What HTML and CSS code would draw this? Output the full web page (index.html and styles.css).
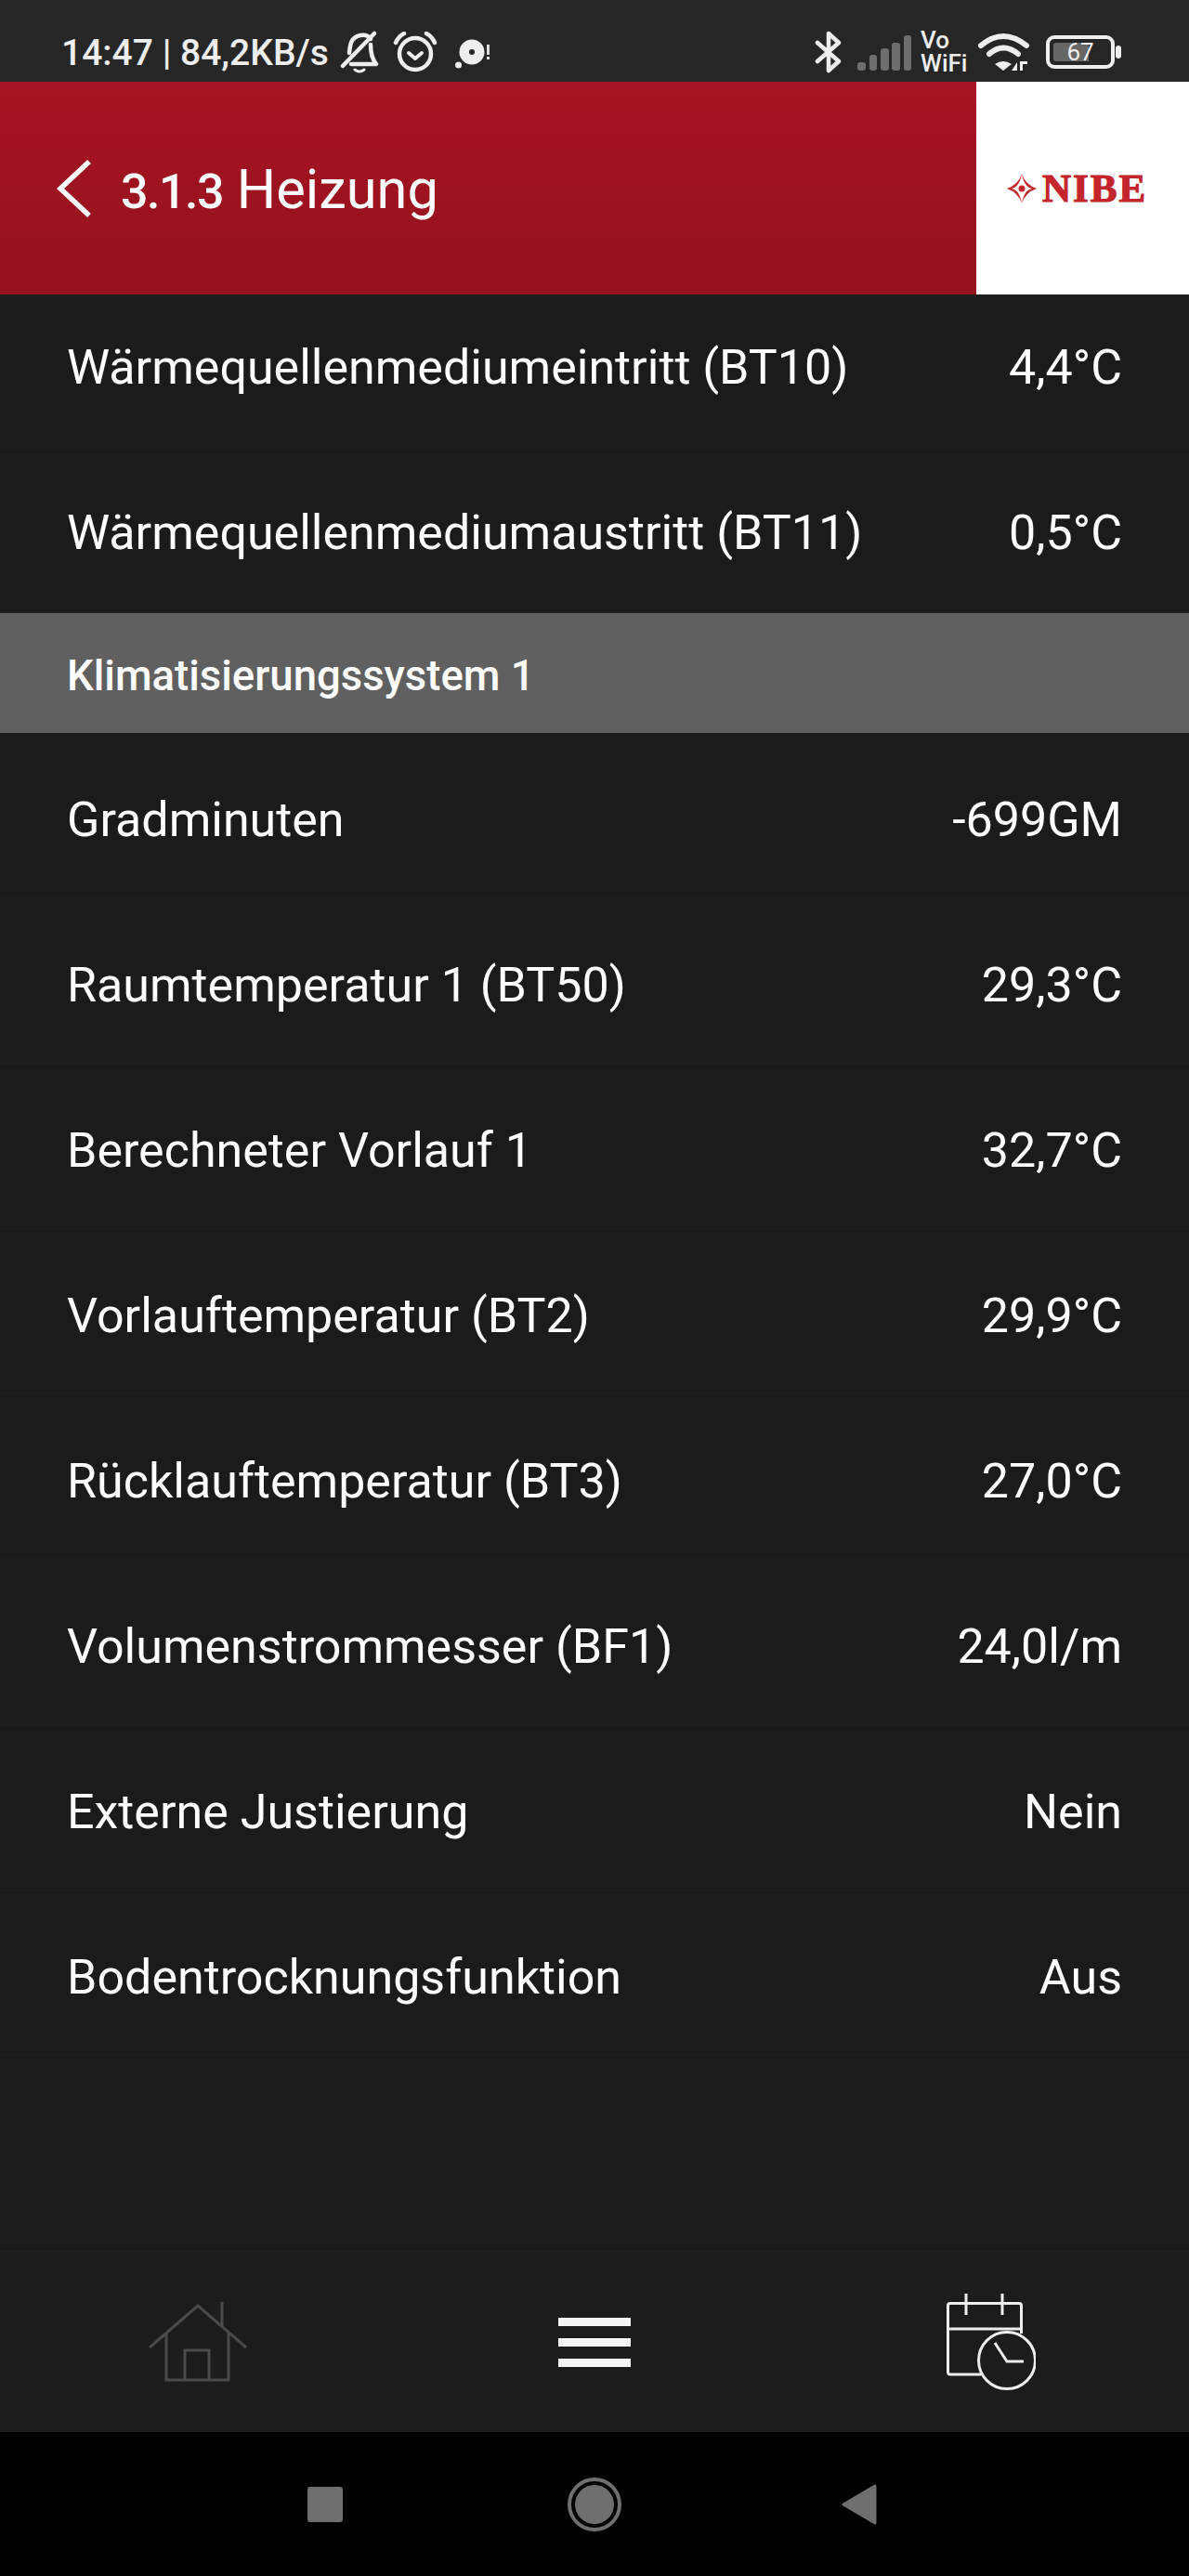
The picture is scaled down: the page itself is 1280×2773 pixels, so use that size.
FILE: index.html
```html
<!DOCTYPE html>
<html lang="de">
<head>
<meta charset="utf-8">
<title>3.1.3 Heizung</title>
<link rel="stylesheet" href="styles.css">
</head>
<body>
<div class="phone">
  <div class="status">
    <div class="status-left">
      <span class="status-text">14:47 | 84,2KB/s</span>
      <svg class="ic-bell" width="42" height="46" viewBox="0 0 42 46" fill="none" stroke="#eee" stroke-width="4.500" stroke-linecap="round" stroke-linejoin="round">
        <path d="M10 24 C11 14 12 7 22 5 C27 4 31 6 33 9"/>
        <path d="M37 3 L3 38"/>
        <path d="M33 15 C33 24 34 30 39 36 L12 36"/>
        <path d="M16 42 Q21 46 26 42" stroke-width="3"/>
      </svg>
      <svg class="ic-alarm" width="48" height="44" viewBox="0 0 48 44" fill="none" stroke="#eee" stroke-linecap="round" stroke-linejoin="round">
        <circle cx="24" cy="24" r="17" stroke-width="4.500"/>
        <path d="M17 23 L24 29 L31 23" stroke-width="4"/>
        <path d="M3 12 Q6 5 12 2" stroke-width="4.500"/>
        <path d="M45 12 Q42 5 36 2" stroke-width="4.500"/>
      </svg>
      <svg class="ic-rec" width="38" height="34" viewBox="0 0 38 34">
        <circle cx="18" cy="14" r="13.500" fill="#eee"/>
        <circle cx="18" cy="14" r="3" fill="#262626"/>
        <circle cx="3.500" cy="28" r="3.500" fill="#eee"/>
        <rect x="34" y="6" width="3" height="11" fill="#ddd"/>
        <rect x="34" y="19" width="3" height="3" fill="#ddd"/>
      </svg>
    </div>
    <div class="status-right">
      <svg class="ic-bt" width="30" height="46" viewBox="0 0 30 46" fill="none" stroke="#eee" stroke-width="4.500" stroke-linecap="round" stroke-linejoin="round">
        <path d="M3 13 L26 33 L15 43 L15 3 L26 13 L3 33"/>
      </svg>
      <svg class="ic-signal" width="58" height="38" viewBox="0 0 58 38" fill="#6e6e6e">
        <rect x="0" y="29" width="9" height="9" rx="3"/>
        <rect x="13" y="21" width="8" height="17" rx="3"/>
        <rect x="25" y="14" width="9" height="24" rx="3"/>
        <rect x="37" y="8" width="9" height="30" rx="3"/>
        <rect x="50" y="0" width="8" height="38" rx="3"/>
      </svg>
      <div class="vowifi"><span>Vo</span><span>WiFi</span></div>
      <svg class="ic-wifi" width="56" height="42" viewBox="0 0 56 42" fill="none" stroke="#eee" stroke-width="6" stroke-linecap="round">
        <path d="M3 14 Q27 -6 52 14"/>
        <path d="M12 23 Q27 10 43 23"/>
        <path d="M27 41 L18 34 Q27 28 36 34 Z" fill="#eee" stroke="none"/>
        <path d="M42 32 L42 41 L36 41 Z" fill="#eee" stroke="none"/>
        <path d="M45 31 L45 41 L48 41 L48 34 L53 34 L53 31 Z" fill="#eee" stroke="none"/>
      </svg>
      <div class="battery">
        <div class="battery-body">
          <div class="battery-fill"></div>
          <span class="battery-num">67</span>
        </div>
        <div class="battery-nub"></div>
      </div>
    </div>
  </div>

  <header class="header">
    <div class="header-main">
      <svg class="ic-back" width="38" height="62" viewBox="0 0 38 62" fill="none" stroke="#fff" stroke-width="5.500">
        <path d="M35 2 L4 31 L35 60"/>
      </svg>
      <span class="title"><span class="title-num">3.1.3</span> Heizung</span>
    </div>
    <div class="logo">
      <svg class="logo-mark" width="32" height="32" viewBox="0 0 32 32" fill="#c4252c">
        <path d="M16 0 Q12 12 0 16 Q13 18 16 0 Z"/>
        <path d="M16 0 Q20 12 32 16 Q19 18 16 0 Z"/>
        <path d="M16 32 Q12 20 0 16 Q13 14 16 32 Z"/>
        <path d="M16 32 Q20 20 32 16 Q19 14 16 32 Z"/>
        <circle cx="16" cy="16" r="3.500"/>
      </svg>
      <span class="logo-text">NIBE</span>
    </div>
  </header>

  <main class="list">
    <div class="list-scroll">
      <div class="row row-top"><span>Wärmequellenmediumeintritt (BT10)</span><span>4,4°C</span></div>
      <div class="row row-top"><span>Wärmequellenmediumaustritt (BT11)</span><span>0,5°C</span></div>
      <div class="section">Klimatisierungssystem 1</div>
      <div class="row"><span>Gradminuten</span><span>-699GM</span></div>
      <div class="row"><span>Raumtemperatur 1 (BT50)</span><span>29,3°C</span></div>
      <div class="row"><span>Berechneter Vorlauf 1</span><span>32,7°C</span></div>
      <div class="row"><span>Vorlauftemperatur (BT2)</span><span>29,9°C</span></div>
      <div class="row"><span>Rücklauftemperatur (BT3)</span><span>27,0°C</span></div>
      <div class="row"><span>Volumenstrommesser (BF1)</span><span>24,0l/m</span></div>
      <div class="row"><span>Externe Justierung</span><span>Nein</span></div>
      <div class="row"><span>Bodentrocknungsfunktion</span><span>Aus</span></div>
    </div>
  </main>

  <nav class="tabs">
    <svg width="106" height="86" viewBox="0 0 106 86" fill="none" stroke="#4a4a4a" stroke-width="3">
      <path d="M1 49 L53 4 L105 49"/>
      <path d="M79 0 L79 26"/>
      <path d="M19 33 L19 84 L86 84 L86 33"/>
      <path d="M39 84 L39 52 L65 52 L65 84"/>
    </svg>
    <div class="burger"><i></i><i></i><i></i></div>
    <svg width="96" height="104" viewBox="0 0 96 104" fill="none" stroke="#eee" stroke-width="3">
      <path d="M37 87 L4 87 Q1.500 87 1.500 84 L1.500 13 Q1.500 10.500 4 10.500 L78 10.500 Q80.500 10.500 80.500 13 L80.500 43"/>
      <path d="M1.500 38 L80.500 38"/>
      <path d="M21 0 L21 23"/>
      <path d="M60 0 L60 23"/>
      <circle cx="65" cy="72" r="30.500"/>
      <path d="M52 53 L65 73 L83 73"/>
    </svg>
  </nav>

  <div class="sysnav">
    <div class="sys-square"></div>
    <div class="sys-circle"><div class="sys-dot"></div></div>
    <svg class="sys-back" width="38" height="44" viewBox="0 0 38 44" fill="#6f6f6f" stroke="#6f6f6f" stroke-width="3" stroke-linejoin="round">
      <path d="M36 2 L2 22 L36 42 Z"/>
    </svg>
  </div>
</div>
</body>
</html>
```

FILE: styles.css
```css
* { box-sizing: border-box; }
html, body { margin: 0; padding: 0; background: #1b1b1b; }
.phone {
  width: 1280px;
  height: 2773px;
  display: flex;
  flex-direction: column;
  font-family: Roboto, "Liberation Sans", sans-serif;
  color: #fff;
  overflow: hidden;
}
.status {
  height: 88px;
  flex: none;
  background: #262626;
  display: flex;
  justify-content: space-between;
  align-items: center;
  padding: 24px 73px 0 66px;
  color: #eee;
}
.status-left, .status-right { display: flex; align-items: center; }
.status-text { font-size: 39px; line-height: 46px; font-weight: 500; margin-right: 12px; padding-top: 2px; }
.ic-alarm { margin-left: 15px; }
.ic-rec { margin-left: 19px; margin-top: 6px; }
.ic-signal { margin-left: 16px; margin-top: 2px; }
.vowifi {
  display: flex;
  flex-direction: column;
  margin-left: 10px;
  font-size: 26px;
  line-height: 25px;
  font-weight: 500;
  width: 52px;
}
.ic-wifi { margin-left: 10px; }
.battery { display: flex; align-items: center; margin-left: 17px; }
.battery-body {
  position: relative;
  width: 74px;
  height: 36px;
  border: 4px solid #eee;
  border-radius: 9px;
  display: flex;
  align-items: center;
  justify-content: center;
}
.battery-fill {
  position: absolute;
  left: 4px;
  top: 4px;
  bottom: 4px;
  width: 38px;
  background: #666;
  border-radius: 3px 0 0 3px;
}
.battery-num { position: relative; font-size: 26px; line-height: 28px; color: #eee; }
.battery-nub { width: 6px; height: 14px; margin-left: 1px; background: #eee; border-radius: 3px; }

.header { height: 229px; flex: none; display: flex; }
.header-main {
  flex: 1;
  background: linear-gradient(#a81423, #93121c);
  display: flex;
  align-items: center;
  padding-left: 61px;
}
.title { font-size: 59.500px; line-height: 64px; margin-left: 31px; padding-top: 6px; }
.title-num { font-size: 52px; font-weight: 500; letter-spacing: -1.500px; }
.logo {
  width: 229px;
  background: #fff;
  display: flex;
  align-items: center;
  justify-content: center;
  gap: 6px;
  padding-right: 12px;
}
.logo-text {
  font-family: "Liberation Serif", serif;
  font-weight: 700;
  font-size: 43px;
  line-height: 42px;
  color: #c4252c;
  letter-spacing: 2px;
  -webkit-text-stroke: 1.200px #c4252c;
}

.list { flex: 1; overflow: hidden; background: #1b1b1b; }
.list-scroll { margin-top: -13px; }
.row {
  height: 178px;
  display: flex;
  justify-content: space-between;
  align-items: center;
  padding: 9px 72px 0 72px;
  font-size: 52px;
  color: #fff;
  border-bottom: 1px solid #1f1f1f;
}
.row-top { padding-top: 5px; }
.section {
  height: 129px;
  background: #606060;
  display: flex;
  align-items: center;
  padding: 5px 72px 0;
  font-size: 45.500px;
  font-weight: 500;
}

.tabs {
  height: 195px;
  flex: none;
  background: #1c1c1c;
  border-top: 1px solid #202020;
  display: grid;
  grid-template-columns: repeat(3, 1fr);
  align-items: center;
  justify-items: center;
}
.burger { display: flex; flex-direction: column; gap: 13px; width: 78px; }
.burger i { display: block; height: 9px; background: #f5f5f5; }

.sysnav {
  height: 155px;
  flex: none;
  background: #000;
  display: flex;
  align-items: center;
  justify-content: center;
  gap: 242px;
  padding-right: 5px;
}
.sys-square { width: 38px; height: 38px; border-radius: 3px; background: #6f6f6f; }
.sys-circle {
  width: 58px;
  height: 58px;
  border: 4px solid #6f6f6f;
  border-radius: 50%;
  display: flex;
  align-items: center;
  justify-content: center;
}
.sys-dot { width: 42px; height: 42px; border-radius: 50%; background: #6f6f6f; }
.sys-back { margin-left: -5px; }
```
